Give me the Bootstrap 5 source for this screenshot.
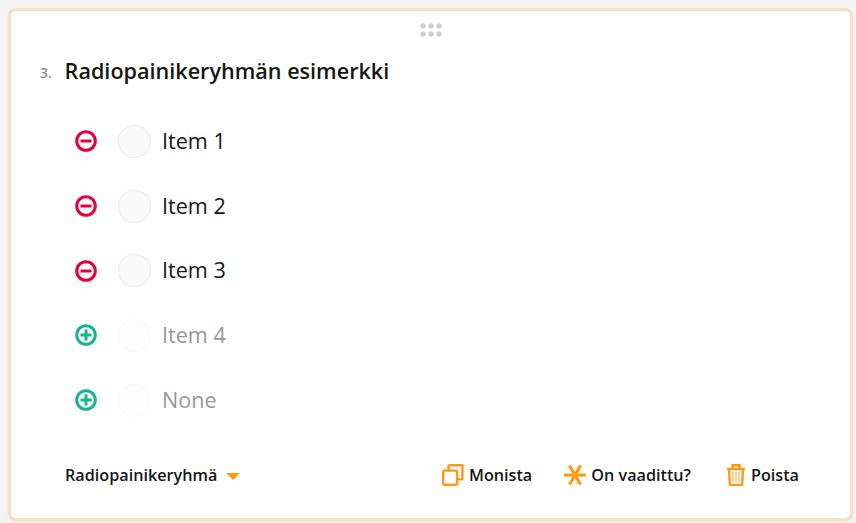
<!DOCTYPE html>
<html lang="fi">
<head>
<meta charset="utf-8">
<title>Radiopainikeryhmä</title>
<link href="https://cdn.jsdelivr.net/npm/bootstrap@5.3.0/dist/css/bootstrap.min.css" rel="stylesheet">
<style>
html,body{height:523px;overflow:hidden}
body{background:#f3f3f3;font-family:"Open Sans",sans-serif;color:#161616;padding:8px 3px 2px 8px}
.qcard{height:513px;background:#fff;border:3px solid #f8dfc0;border-radius:8px;padding:0 51px 0 29px;box-shadow:0 1px 2px rgba(0,0,0,.05)}
.grip{height:38px;padding-top:12px;padding-left:22px}
.grip svg{display:block}
.qhead{height:44px}
.qnum{width:24.6px;font-size:14px;font-weight:600;color:#8f8f8f;padding-top:2px}
.qtitle{font-size:21.6px;font-weight:600;margin:0;line-height:44px}
.opts{margin-top:16px;padding-left:35px}
.opt{height:64.7px}
.ico{width:22px;height:22px;flex:none}
.radio{width:33px;height:33px;border-radius:50%;background:#f9f9f9;box-shadow:inset 0 0 2px rgba(0,0,0,.14), 0 0 1px rgba(0,0,0,.08);flex:none;margin:0 11px 0 21px}
.optlabel{font-size:21.6px;line-height:33px;margin-top:-2px}
.off .radio{background:#fdfdfd;box-shadow:inset 0 0 2px rgba(0,0,0,.05)}
.off .optlabel{color:#989898}
.qfoot{margin-top:23px;height:40px;font-size:16.2px;font-weight:600;padding-left:25px}
.caret-down{width:0;height:0;border-left:7px solid transparent;border-right:7px solid transparent;border-top:7px solid #ff9814;margin-left:9px;margin-top:2px}
.act{gap:5px}
.acts{gap:32px}
.acts .act:last-child{gap:6px;margin-left:4px}
</style>
</head>
<body>
<div class="qcard">
  <div class="grip d-flex justify-content-center">
    <svg width="22" height="16" viewBox="0 0 22 16" fill="#cfcfcf"><circle cx="3" cy="3" r="2.7"/><circle cx="11" cy="3" r="2.7"/><circle cx="19" cy="3" r="2.7"/><circle cx="3" cy="11" r="2.7"/><circle cx="11" cy="11" r="2.7"/><circle cx="19" cy="11" r="2.7"/></svg>
  </div>
  <div class="qhead d-flex align-items-center">
    <span class="qnum">3.</span>
    <h1 class="qtitle">Radiopainikeryhmän esimerkki</h1>
  </div>
  <div class="opts">
    <div class="opt d-flex align-items-center">
      <svg class="ico" viewBox="0 0 22 22" fill="none" stroke="#e4003a" stroke-width="3"><circle cx="11" cy="11" r="9.3"/><path d="M5.5 11h11"/></svg>
      <span class="radio"></span><span class="optlabel">Item 1</span>
    </div>
    <div class="opt d-flex align-items-center">
      <svg class="ico" viewBox="0 0 22 22" fill="none" stroke="#e4003a" stroke-width="3"><circle cx="11" cy="11" r="9.3"/><path d="M5.5 11h11"/></svg>
      <span class="radio"></span><span class="optlabel">Item 2</span>
    </div>
    <div class="opt d-flex align-items-center">
      <svg class="ico" viewBox="0 0 22 22" fill="none" stroke="#e4003a" stroke-width="3"><circle cx="11" cy="11" r="9.3"/><path d="M5.5 11h11"/></svg>
      <span class="radio"></span><span class="optlabel">Item 3</span>
    </div>
    <div class="opt off d-flex align-items-center">
      <svg class="ico" viewBox="0 0 22 22" fill="none" stroke="#19b394" stroke-width="3"><circle cx="11" cy="11" r="9.3"/><path d="M5.5 11h11M11 5.5v11"/></svg>
      <span class="radio"></span><span class="optlabel">Item 4</span>
    </div>
    <div class="opt off d-flex align-items-center">
      <svg class="ico" viewBox="0 0 22 22" fill="none" stroke="#19b394" stroke-width="3"><circle cx="11" cy="11" r="9.3"/><path d="M5.5 11h11M11 5.5v11"/></svg>
      <span class="radio"></span><span class="optlabel">None</span>
    </div>
  </div>
  <div class="qfoot d-flex align-items-center justify-content-between">
    <div class="d-flex align-items-center">Radiopainikeryhmä<span class="caret-down"></span></div>
    <div class="acts d-flex align-items-center">
      <div class="act d-flex align-items-center">
        <svg width="22" height="22" viewBox="0 0 22 22" fill="none" stroke="#ff9814" stroke-width="2.4" stroke-linejoin="round"><rect x="1.2" y="6.6" width="14" height="14.2" rx="1.5"/><path d="M6.5 6.5V2.7a1.5 1.5 0 0 1 1.5-1.5h12.4v14.2h-5.3"/></svg>
        <span>Monista</span>
      </div>
      <div class="act d-flex align-items-center">
        <svg width="22" height="22" viewBox="0 0 22 22" fill="none" stroke="#ff9814" stroke-width="3.2"><path d="M0 11h22M5.5 1.5l11 19M16.5 1.5l-11 19"/></svg>
        <span>On vaadittu?</span>
      </div>
      <div class="act d-flex align-items-center">
        <svg width="18" height="22" viewBox="0 0 18 22" fill="none" stroke="#ff9814" stroke-width="2.4"><path d="M0 5h18M2 5l.8 15a1 1 0 0 0 1 1h10.4a1 1 0 0 0 1-1L16 5M5.5 4V1.2h7V4"/><path stroke-width="1.2" opacity=".8" d="M6 8v10M9 8v10M12 8v10"/></svg>
        <span>Poista</span>
      </div>
    </div>
  </div>
</div>
<script src="https://cdn.jsdelivr.net/npm/bootstrap@5.3.0/dist/js/bootstrap.bundle.min.js"></script>
</body>
</html>
